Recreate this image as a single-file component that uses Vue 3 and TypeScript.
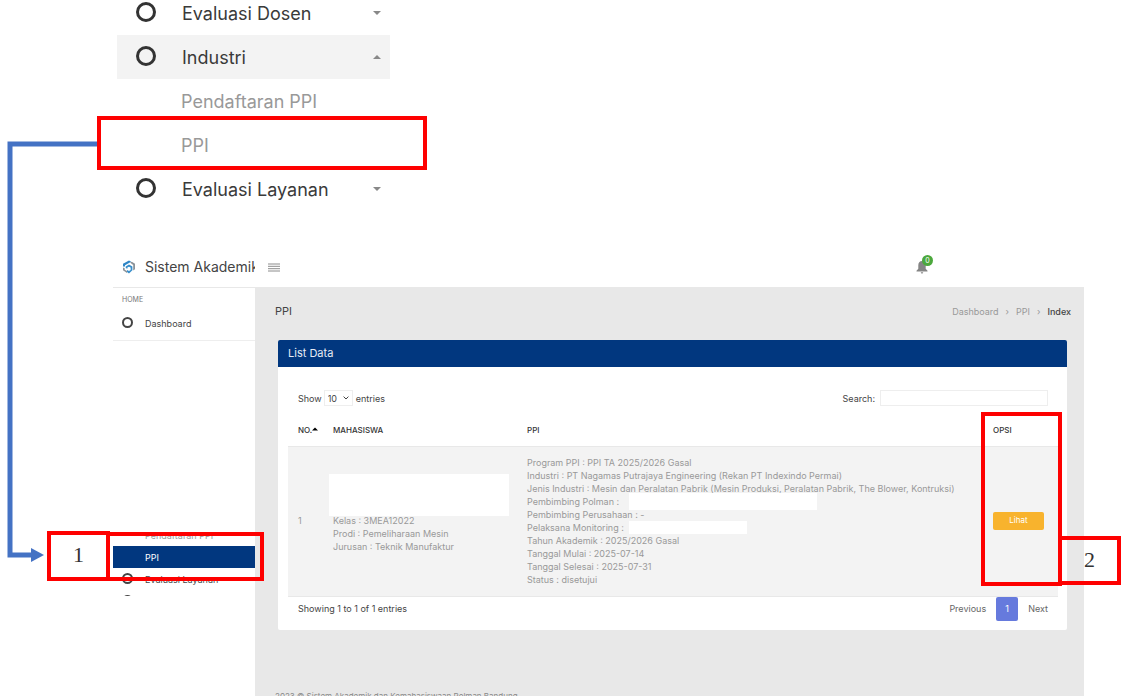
<script setup lang="ts">
import { ref } from 'vue'

interface MenuEntry {
  label: string
  kind: 'group' | 'child'
  open?: boolean
}

const menu: MenuEntry[] = [
  { label: 'Evaluasi Dosen', kind: 'group' },
  { label: 'Industri', kind: 'group', open: true },
  { label: 'Pendaftaran PPI', kind: 'child' },
  { label: 'PPI', kind: 'child' },
  { label: 'Evaluasi Layanan', kind: 'group' },
]

interface DetailLine {
  text: string
  mask?: 'wide' | 'narrow'
}

const details: DetailLine[] = [
  { text: 'Program PPI : PPI TA 2025/2026 Gasal' },
  { text: 'Industri : PT Nagamas Putrajaya Engineering (Rekan PT Indexindo Permai)' },
  { text: 'Jenis Industri : Mesin dan Peralatan Pabrik (Mesin Produksi, Peralatan Pabrik, The Blower, Kontruksi)' },
  { text: 'Pembimbing Polman :', mask: 'wide' },
  { text: 'Pembimbing Perusahaan : -' },
  { text: 'Pelaksana Monitoring :', mask: 'narrow' },
  { text: 'Tahun Akademik : 2025/2026 Gasal' },
  { text: 'Tanggal Mulai : 2025-07-14' },
  { text: 'Tanggal Selesai : 2025-07-31' },
  { text: 'Status : disetujui' },
]

const student = ['Kelas : 3MEA12022', 'Prodi : Pemeliharaan Mesin', 'Jurusan : Teknik Manufaktur']

const pageSize = ref('10')
const search = ref('')
</script>

<template>
  <div class="page">
    <nav class="menu" aria-label="Menu">
      <a v-for="m in menu" :key="m.label" href="#" class="menu-row" :class="[m.kind, { open: m.open }]">
        <span v-if="m.kind === 'group'" class="ring"></span>
        <span class="menu-label">{{ m.label }}</span>
        <svg v-if="m.kind === 'group'" class="caret" viewBox="0 0 8 4" aria-hidden="true">
          <path :d="m.open ? 'M0 4L4 0L8 4Z' : 'M0 0L4 4L8 0Z'" />
        </svg>
      </a>
    </nav>

    <div class="app">
      <header class="top">
        <div class="brand">
          <svg class="logo" viewBox="0 0 14 14" aria-hidden="true">
            <path d="M1 6.4V3.7L7 .5l2.2 1.2L3 5.2v1.4z" fill="#2f86c6" />
            <path d="M8 2.4L9.8 1.8 13 3.7v5.6l-1.8 1.2V5z" fill="#8b9298" />
            <path d="M1 7.500l1.700.8v1.400L5 11v2L1 10.300z" fill="#8b9298" />
            <path d="M7 4.6l3.4 1.9v3.8L7 13.4 5 12V10l2 .9 1.6-1V7.6L7 6.7 5.4 7.6v1.2L3.7 8V6.4z" fill="#3a8fcb" />
          </svg>
          <span class="brand-name">Sistem Akademik</span>
        </div>
        <button class="burger" type="button" aria-label="Menu">
          <svg viewBox="0 0 12 9" aria-hidden="true">
            <path d="M0 1h12M0 3.3h12M0 5.7h12M0 8h12" stroke="#8c8c8c" stroke-width="1" />
          </svg>
        </button>
        <button class="bell" type="button" aria-label="0">
          <svg viewBox="0 0 12 14" aria-hidden="true">
            <path d="M6 1C3.600 1 2.300 3 2.300 5.200V8.800L.5 10.800V11.500H11.500V10.800L9.700 8.800V5.200C9.700 3 8.400 1 6 1ZM4.800 12.200H7.200C7.200 13.900 4.800 13.900 4.800 12.200Z" fill="#858585" />
          </svg>
          <span class="badge">0</span>
        </button>
      </header>

      <div class="body">
        <aside class="side">
          <div class="side-top">
            <div class="side-head">HOME</div>
            <a href="#" class="side-row"><span class="ring small"></span>Dashboard</a>
          </div>
          <div class="side-list">
            <a href="#" class="side-row muted">Pendaftaran PPI</a>
            <a href="#" class="side-row active">PPI</a>
            <a href="#" class="side-row"><span class="ring small"></span>Evaluasi Layanan</a>
            <div class="side-row"><span class="ring small"></span></div>
          </div>
        </aside>

        <main class="main">
          <div class="title-row">
            <h1>PPI</h1>
            <div class="crumbs">
              <a href="#">Dashboard</a><span>›</span><a href="#">PPI</a><span>›</span><b>Index</b>
            </div>
          </div>

          <section class="card">
            <h2>List Data</h2>
            <div class="card-body">
              <div class="tools">
                <div class="length">
                  <label for="size">Show</label>
                  <div class="select-wrap">
                    <select id="size" v-model="pageSize">
                      <option>10</option>
                      <option>25</option>
                      <option>50</option>
                    </select>
                    <svg viewBox="0 0 6 4" aria-hidden="true">
                      <path d="M.6.6L3 3L5.400.6" fill="none" stroke="#444" />
                    </svg>
                  </div>
                  <span>entries</span>
                </div>
                <div class="search">
                  <label for="q">Search:</label>
                  <input id="q" v-model="search" type="text" />
                </div>
              </div>

              <table>
                <colgroup>
                  <col class="c-no" />
                  <col class="c-mhs" />
                  <col />
                  <col class="c-ops" />
                </colgroup>
                <thead>
                  <tr>
                    <th>
                      NO.<svg class="sort" viewBox="0 0 6 4" aria-hidden="true"><path d="M0 3.500L3 .5L6 3.500Z" /></svg>
                    </th>
                    <th>MAHASISWA</th>
                    <th>PPI</th>
                    <th>OPSI</th>
                  </tr>
                </thead>
                <tbody>
                  <tr>
                    <td>1</td>
                    <td>
                      <div class="student">
                        <span class="mask name"></span>
                        <div v-for="s in student" :key="s">{{ s }}</div>
                      </div>
                    </td>
                    <td>
                      <div v-for="d in details" :key="d.text" class="line">
                        {{ d.text }}<span v-if="d.mask" class="mask" :class="d.mask"></span>
                      </div>
                    </td>
                    <td><button class="view" type="button">Lihat</button></td>
                  </tr>
                </tbody>
              </table>

              <div class="foot">
                <span class="info">Showing 1 to 1 of 1 entries</span>
                <div class="pager">
                  <button type="button">Previous</button>
                  <button type="button" class="current">1</button>
                  <button type="button">Next</button>
                </div>
              </div>
            </div>
          </section>

          <footer>2023 © Sistem Akademik dan Kemahasiswaan Polman Bandung</footer>
        </main>
      </div>
    </div>

    <svg class="arrow" viewBox="0 0 100 430" aria-hidden="true">
      <path d="M98 9H10V420H33" fill="none" stroke="#4472c4" stroke-width="5" />
      <path d="M31 413L44 420L31 427Z" fill="#4472c4" />
    </svg>
    <div class="mark mark-menu"></div>
    <div class="mark mark-side"></div>
    <div class="mark mark-one">1</div>
    <div class="mark mark-ops"></div>
    <div class="mark mark-two">2</div>
  </div>
</template>

<style>
body {
  margin: 0;
  background: #fff;
}
</style>

<style scoped>
* {
  box-sizing: border-box;
}
.page {
  position: relative;
  height: 100vh;
  overflow: hidden;
  display: flex;
  flex-direction: column;
  font-family: Inter, 'Open Sans', 'Liberation Sans', sans-serif;
  font-size: 9px;
  color: #444;
}
a {
  color: inherit;
  text-decoration: none;
}
button {
  font: inherit;
  color: inherit;
  border: 0;
  padding: 0;
  background: none;
}
.menu {
  flex: none;
  width: 273px;
  margin: -9px 0 0 117px;
  font-size: 18px;
  color: #3a3a3a;
}
.menu-row {
  display: flex;
  align-items: center;
  height: 44px;
  padding: 0 9px 0 19px;
}
.menu-row.open {
  background: #f3f3f3;
}
.menu-row.child {
  padding-left: 64px;
  color: #999;
}
.menu-label {
  flex: 1;
}
.ring {
  width: 20px;
  height: 20px;
  margin: 0 26px 3px 0;
  border: 3px solid #333;
  border-radius: 50%;
}
.ring.small {
  width: 11px;
  height: 11px;
  margin: 0 12px 2px 0;
  border: 2px solid #444;
}
.caret {
  width: 8px;
  height: 4px;
  fill: #888;
}
.app {
  flex: 1;
  display: flex;
  flex-direction: column;
  margin: 36px 42px 0 113px;
}
.top {
  flex: none;
  display: flex;
  align-items: center;
  height: 41px;
  border-bottom: 1px solid #e8e8e8;
}
.brand {
  display: flex;
  align-items: center;
  width: 142px;
  padding-left: 9px;
  overflow: hidden;
  white-space: nowrap;
}
.logo {
  flex: none;
  width: 14px;
  height: 14px;
  margin-right: 9px;
}
.brand-name {
  font-size: 14px;
  line-height: 20px;
}
.burger {
  width: 12px;
  height: 10px;
  margin-left: 13px;
}
.burger svg,
.bell svg {
  display: block;
  width: 100%;
}
.bell {
  position: relative;
  width: 12px;
  height: 14px;
  margin: 0 156px 0 auto;
}
.badge {
  position: absolute;
  left: 6px;
  top: -5px;
  width: 11px;
  height: 11px;
  border-radius: 50%;
  background: #4ca83d;
  color: #fff;
  font-size: 7px;
  line-height: 11px;
}
.body {
  flex: 1;
  display: flex;
}
.side {
  width: 142px;
}
.side-top {
  height: 53px;
  padding-top: 6px;
  border-bottom: 1px solid #eee;
}
.side-head {
  padding-left: 9px;
  font-size: 7px;
  line-height: 12px;
  color: #777;
}
.side-row {
  display: flex;
  align-items: center;
  height: 22px;
  padding-left: 9px;
}
.side-top .side-row {
  margin-top: 6px;
}
.side-list {
  display: flex;
  flex-direction: column;
  justify-content: flex-start;
  height: 66px;
  margin-top: 189px;
  overflow: hidden;
}
.side-list .side-row {
  flex: none;
}
.side-row.muted {
  margin-top: -6px;
  padding-left: 32px;
  color: #999;
}
.side-row.active {
  padding-left: 32px;
  background: #01377f;
  color: #fff;
}
.main {
  flex: 1;
  min-width: 0;
  padding: 13px 13px 0 20px;
  background: #e8e8e8;
}
.title-row {
  display: flex;
  align-items: center;
  justify-content: space-between;
  height: 20px;
}
h1 {
  margin: 0;
  font-size: 11px;
  font-weight: 400;
}
.crumbs {
  display: flex;
  gap: 7px;
  color: #999;
}
.crumbs b {
  font-weight: 500;
  color: #444;
}
.card {
  margin: 19px 4px 0 3px;
  border-radius: 2px;
  background: #fff;
  overflow: hidden;
}
h2 {
  margin: 0;
  padding-left: 10px;
  background: #01377f;
  color: #e6ecf5;
  font-size: 11px;
  font-weight: 400;
  line-height: 27px;
}
.card-body {
  padding: 23px 9px 9px 10px;
}
.tools {
  display: flex;
  justify-content: space-between;
  padding: 0 10px;
}
.length,
.search {
  display: flex;
  align-items: center;
}
.select-wrap {
  position: relative;
  margin: 0 3px 0 2px;
}
select,
input {
  display: block;
  height: 16px;
  border: 1px solid #eee;
  border-radius: 0;
  background: #fff;
  font: inherit;
  color: inherit;
}
select {
  width: 29px;
  padding: 0 3px;
  appearance: none;
}
.select-wrap svg {
  position: absolute;
  right: 4px;
  top: 6px;
  width: 6px;
  height: 4px;
}
input {
  width: 168px;
  margin-left: 5px;
}
table {
  width: 100%;
  margin-top: 8px;
  border-collapse: collapse;
  table-layout: fixed;
}
.c-no {
  width: 35px;
}
.c-mhs {
  width: 194px;
}
.c-ops {
  width: 75px;
}
th,
td {
  padding: 9px 0 10px 10px;
  text-align: left;
  vertical-align: middle;
  white-space: nowrap;
}
th {
  height: 32px;
  padding: 0 0 0 10px;
  font-size: 8px;
  font-weight: 500;
  color: #333;
}
.sort {
  width: 6px;
  height: 4px;
  margin-bottom: 2px;
}
td {
  border-top: 1px solid #e8e8e8;
  border-bottom: 1px solid #e8e8e8;
  background: #f3f3f3;
  color: #999;
  line-height: 13px;
}
.student {
  position: relative;
  padding-top: 26px;
}
.line {
  position: relative;
}
.mask {
  position: absolute;
  background: #fff;
}
.mask.name {
  left: -4px;
  top: -14px;
  width: 180px;
  height: 42px;
}
.mask.wide {
  left: 102px;
  top: -2px;
  width: 188px;
  height: 17px;
}
.mask.narrow {
  left: 102px;
  top: 0;
  width: 118px;
  height: 13px;
}
.view {
  display: block;
  width: 51px;
  height: 18px;
  border-radius: 2px;
  background: #f8b32d;
  color: #fff;
  font-size: 8px;
}
.foot {
  display: flex;
  align-items: center;
  justify-content: space-between;
  padding: 0 10px;
}
.pager {
  display: flex;
  align-items: center;
  gap: 10px;
  color: #666;
}
.current {
  width: 22px;
  height: 24px;
  border-radius: 2px;
  background: #667add;
  color: #fff;
}
footer {
  margin-top: 60px;
  font-size: 8px;
  line-height: 12px;
  white-space: nowrap;
  color: #888;
}
.arrow {
  position: absolute;
  left: 0;
  top: 135px;
  width: 100px;
  height: 430px;
}
.mark {
  position: absolute;
  border: 4px solid #fe0000;
  font-family: 'Liberation Serif', serif;
  font-size: 22px;
  line-height: 40px;
  text-align: center;
  color: #333;
}
.mark-menu {
  left: 97px;
  top: 116px;
  width: 330px;
  height: 54px;
}
.mark-side {
  left: 106px;
  top: 532px;
  width: 158px;
  height: 49px;
}
.mark-one {
  left: 47px;
  top: 531px;
  width: 63px;
  height: 50px;
}
.mark-ops {
  right: 64px;
  top: 412px;
  width: 81px;
  height: 174px;
}
.mark-two {
  right: 5px;
  top: 536px;
  width: 63px;
  height: 49px;
}
</style>
